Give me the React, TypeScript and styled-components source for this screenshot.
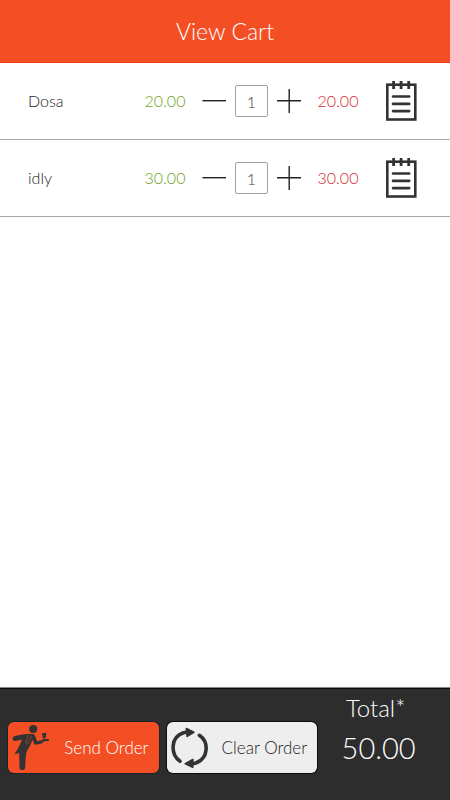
import React, { useState } from "react";
import styled, { createGlobalStyle } from "styled-components";

const GlobalStyle = createGlobalStyle`
  *, *::before, *::after { box-sizing: border-box; }
  body { margin: 0; background: #fff; }
  button, input { font: inherit; color: inherit; }
`;

const Page = styled.div`
  display: flex;
  flex-direction: column;
  min-height: 100vh;
  background: #ffffff;
  color: #222222;
  font-family: Lato, "Open Sans", sans-serif;
  font-size: 16px;
  font-weight: 300;
  line-height: 20px;
`;

const Header = styled.header`
  display: flex;
  align-items: center;
  justify-content: center;
  height: 63px;
  background: #f44f24;
  border-bottom: 1px solid #f03c10;
`;

const Title = styled.h1`
  margin: 0;
  color: #ffffff;
  font-size: 23px;
  font-weight: 300;
  line-height: 28px;
`;

const CartList = styled.ul`
  flex: 1;
  margin: 0;
  padding: 0;
  list-style: none;
`;

const CartRow = styled.li`
  display: flex;
  align-items: center;
  height: 77px;
  padding: 0 33px 0 28px;
  border-bottom: 1px solid #a8a8a8;
`;

const ItemName = styled.span`
  flex: 1;
  min-width: 0;
`;

const Price = styled.span<{ $tone: string }>`
  width: 42px;
  text-align: center;
  color: ${(p) => p.$tone};
`;

const Stepper = styled.div`
  display: flex;
  align-items: center;
  gap: 9px;
  margin: 0 16px 0 16px;
`;

const IconButton = styled.button`
  display: flex;
  flex: none;
  padding: 0;
  border: 0;
  background: none;
  cursor: pointer;
`;

const NoteButton = styled(IconButton)`
  margin-left: 27px;
`;

const Quantity = styled.input`
  width: 33px;
  height: 32px;
  padding: 0;
  border: 1px solid #a0a0a0;
  border-radius: 2px;
  background: #ffffff;
  color: #444444;
  text-align: center;
`;

const Footer = styled.footer`
  display: grid;
  grid-template-columns: 151fr 151fr 107fr;
  align-items: start;
  gap: 8px;
  height: 113px;
  padding: 0 18px 0 8px;
  background: #2d2d2d;
  border-top: 1px solid #8a8a8a;
  box-shadow: inset 0 1px 0 #0a0a0a;
`;

const ActionButton = styled.button<{ $primary?: boolean }>`
  display: flex;
  align-items: center;
  justify-content: space-between;
  height: 51px;
  margin-top: 34px;
  padding: 0 10px 0 4px;
  border: 0;
  border-radius: 6px;
  box-shadow: 0 0 0 1px ${(p) => (p.$primary ? "#16262a" : "#0c0c0c")};
  background: ${(p) => (p.$primary ? "#f44f24" : "#eeeeee")};
  color: ${(p) => (p.$primary ? "#ffffff" : "#222222")};
  font-size: 17px;
  white-space: nowrap;
  cursor: pointer;
`;

const Total = styled.div`
  display: flex;
  flex-direction: column;
  align-items: center;
  color: #ffffff;
`;

const TotalLabel = styled.span`
  margin-top: 6px;
  padding-right: 6px;
  font-size: 24px;
  line-height: 28px;
`;

const TotalAmount = styled.output`
  margin-top: 6px;
  font-size: 29px;
  line-height: 40px;
`;

const MinusIcon = () => (
  <svg width="24" height="24" viewBox="0 0 24 24" aria-hidden="true">
    <path d="M0.5 11.7H24" stroke="#222" strokeWidth="1.4" />
  </svg>
);

const PlusIcon = () => (
  <svg width="24" height="24" viewBox="0 0 24 24" aria-hidden="true">
    <path d="M0 11.7H24M12.2 0V24" stroke="#222" strokeWidth="1.4" />
  </svg>
);

const NoteIcon = () => (
  <svg width="31" height="41" viewBox="0 0 31 41" fill="none" stroke="#333" aria-hidden="true">
    <rect x="1.3" y="3.7" width="28" height="34.8" strokeWidth="2.6" />
    <path d="M7.6 0V8M15.1 0V8M22.7 0V8" strokeWidth="2.8" />
    <path d="M7 15.5H23.2M7 22.9H23.2M7 30.1H23.2" strokeWidth="2.6" strokeLinecap="round" />
  </svg>
);

const WaiterIcon = () => (
  <svg width="38" height="48" viewBox="0 0 38 48" fill="#333" aria-hidden="true">
    <circle cx="21.2" cy="5" r="4.1" />
    <path d="M1.8 12.6C6 10.7 11.5 9.9 16 9.9H20.8C22.3 9.9 23 11 23.4 12.4L25.2 17.2L30.5 15.9V15H37V16.7L31.5 17.4L30 19.4L25 20.6C23.4 21 22.4 20.5 21.8 19L20.6 15.8L17.6 22.5C15.2 26 14 28.5 13.7 33L13.2 43.4C13 46.9 7.7 46.9 7.5 43.4L7.2 29L2.4 30.2C4.9 26.4 8.6 20.5 9.8 15.5L3 16.9C0.4 17.2 -0.2 13.8 1.8 12.6Z" />
    <path d="M30 9H34.4L33.6 14.3H30.8Z" />
    <path d="M16.2 11.4L13.8 19.4M19.6 11.8L17.6 17L14.4 21" fill="none" stroke="#d64a27" strokeWidth="0.6" />
  </svg>
);

const RefreshIcon = () => (
  <svg width="38" height="42" viewBox="0 0 38 42" fill="none" stroke="#333" strokeWidth="3.6" aria-hidden="true">
    <path d="M9 34.2C-0.8 27 -0.6 10 12.5 5.8L16.5 5" strokeLinecap="round" />
    <path d="M28.4 8.3C38 15 37.8 31 24.8 36L20.5 37" strokeLinecap="round" />
    <path d="M15.4 1.6L22.8 5.2L16.2 9.3Z" fill="#333" strokeWidth="1.8" strokeLinejoin="round" />
    <path d="M21.8 32.6L14.4 36.8L21.7 40.2Z" fill="#333" strokeWidth="1.8" strokeLinejoin="round" />
  </svg>
);

const initialItems = [
  { name: "Dosa", price: 20, quantity: 1 },
  { name: "idly", price: 30, quantity: 1 },
];

export default function App() {
  const [items, setItems] = useState(initialItems);
  const setQuantity = (name: string, quantity: number) =>
    setItems((current) =>
      current.map((item) =>
        item.name === name ? { ...item, quantity: Math.max(0, quantity || 0) } : item
      )
    );
  const total = items.reduce((sum, item) => sum + item.price * item.quantity, 0);

  return (
    <>
      <GlobalStyle />
      <Page>
        <Header>
          <Title>View Cart</Title>
        </Header>
        <CartList>
          {items.map((item) => (
            <CartRow key={item.name}>
              <ItemName>{item.name}</ItemName>
              <Price $tone="#6fa321">{item.price.toFixed(2)}</Price>
              <Stepper>
                <IconButton
                  aria-label={`Remove one ${item.name}`}
                  onClick={() => setQuantity(item.name, item.quantity - 1)}
                >
                  <MinusIcon />
                </IconButton>
                <Quantity
                  aria-label={`Quantity of ${item.name}`}
                  inputMode="numeric"
                  value={item.quantity}
                  onChange={(e) => setQuantity(item.name, Number(e.target.value))}
                />
                <IconButton
                  aria-label={`Add one ${item.name}`}
                  onClick={() => setQuantity(item.name, item.quantity + 1)}
                >
                  <PlusIcon />
                </IconButton>
              </Stepper>
              <Price $tone="#d8282c">{(item.price * item.quantity).toFixed(2)}</Price>
              <NoteButton aria-label={`Note for ${item.name}`}>
                <NoteIcon />
              </NoteButton>
            </CartRow>
          ))}
        </CartList>
        <Footer>
          <ActionButton $primary>
            <WaiterIcon />
            Send Order
          </ActionButton>
          <ActionButton onClick={() => setItems([])}>
            <RefreshIcon />
            Clear Order
          </ActionButton>
          <Total>
            <TotalLabel>Total*</TotalLabel>
            <TotalAmount>{total.toFixed(2)}</TotalAmount>
          </Total>
        </Footer>
      </Page>
    </>
  );
}
